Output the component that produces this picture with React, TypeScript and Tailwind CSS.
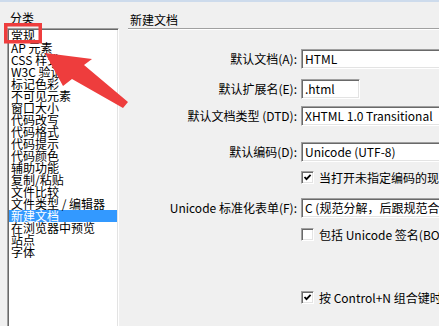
import React from "react";

const items = [
  "常规",
  "AP 元素",
  "CSS 样式",
  "W3C 验证程序",
  "标记色彩",
  "不可见元素",
  "窗口大小",
  "代码改写",
  "代码格式",
  "代码提示",
  "代码颜色",
  "辅助功能",
  "复制/粘贴",
  "文件比较",
  "文件类型 / 编辑器",
  "新建文档",
  "在浏览器中预览",
  "站点",
  "字体",
];

function Field({ value, w }: { value: string; w: string }) {
  return (
    <div
      className={`h-[20px] ${w} shrink-0 bg-white border border-t-[#a0a0a0] border-l-[#a0a0a0] border-b-white border-r-white shadow-[inset_1px_1px_0_#696969,inset_-1px_-1px_0_#e3e3e3] flex items-center pl-[3px] whitespace-nowrap overflow-hidden`}
    >
      {value}
    </div>
  );
}

function Row({ label, value, w, mt }: { label: string; value: string; w: string; mt: string }) {
  return (
    <div className={`flex items-center h-[20px] ${mt}`}>
      <div className="w-[177px] shrink-0 text-right whitespace-nowrap">{label}</div>
      <div className="w-[4px] shrink-0" />
      <Field value={value} w={w} />
    </div>
  );
}

function Check({ checked, label, mt }: { checked: boolean; label: string; mt: string }) {
  return (
    <div className={`flex items-center h-[13px] ${mt}`}>
      <div className="w-[181px] shrink-0" />
      <div className="w-[13px] h-[13px] shrink-0 bg-white border border-t-[#a0a0a0] border-l-[#a0a0a0] border-b-white border-r-white shadow-[inset_1px_1px_0_#696969,inset_-1px_-1px_0_#e3e3e3] flex items-center justify-center">
        {checked && (
          <svg width="9" height="9" viewBox="0 0 9 9">
            <path d="M1.5 4 L3.5 6.2 L7.6 1.8" stroke="#000" strokeWidth="1.8" fill="none" />
          </svg>
        )}
      </div>
      <div className="ml-[5px] whitespace-nowrap">{label}</div>
    </div>
  );
}

export default function App() {
  return (
    <div className="relative w-[439px] h-[326px] overflow-hidden bg-[#f0f0f0] text-[12px] leading-[12px] text-black font-['Noto_Sans_CJK_SC',sans-serif]">
      <div className="h-[2px] bg-[#cddbec]" />
      <div className="flex">
        <div className="w-[120px] shrink-0 pl-[7px] pt-[10px]">
          <div className="pl-[3px] h-[16px] leading-[12px]">分类</div>
          <div className="w-[112px] h-[310px] bg-white border border-t-[#a0a0a0] border-l-[#a0a0a0] border-r-white border-b-white shadow-[inset_1px_1px_0_#696969,inset_-1px_-1px_0_#e3e3e3] pt-[1px] pl-[1px] pr-[1px]">
            {items.map((t) => (
              <div
                key={t}
                className={`h-[12px] leading-[12px] pl-[2px] whitespace-nowrap ${
                  t === "新建文档" ? "bg-[#3399ff] text-white" : ""
                }`}
              >
                {t}
              </div>
            ))}
          </div>
        </div>
        <div className="flex-1 pt-[12px]">
          <div className="ml-[10px] h-[12px] leading-[12px]">新建文档</div>
          <div className="ml-[8px] mt-[2px] border-t border-t-[#a0a0a0] border-b border-b-white" />
          <Row label="默认文档(A):" value="HTML" w="w-[160px]" mt="mt-[19px]" />
          <Row label="默认扩展名(E):" value=".html" w="w-[59px]" mt="mt-[10px]" />
          <Row label="默认文档类型 (DTD):" value="XHTML 1.0 Transitional" w="w-[160px]" mt="mt-[7px]" />
          <Row label="默认编码(D):" value="Unicode (UTF-8)" w="w-[160px]" mt="mt-[16px]" />
          <Check checked label="当打开未指定编码的现有文件时使用" mt="mt-[9px]" />
          <Row label="Unicode 标准化表单(F):" value="C (规范分解，后跟规范合成)" w="w-[160px]" mt="mt-[14px]" />
          <Check checked={false} label="包括 Unicode 签名(BOM)" mt="mt-[10px]" />
          <Check checked label="按 Control+N 组合键时显示新建文档对话框" mt="mt-[50px]" />
        </div>
      </div>
      <svg className="absolute left-0 top-0 pointer-events-none" width="439" height="326" viewBox="0 0 439 326">
        <rect x="5.75" y="24.75" width="34.5" height="17" fill="none" stroke="#ee3d3d" strokeWidth="3.5" />
        <polygon
          points="45,53 92,59 84,65 128,102 123,108 72,79 63,86"
          fill="#ee3d3d"
        />
      </svg>
    </div>
  );
}
